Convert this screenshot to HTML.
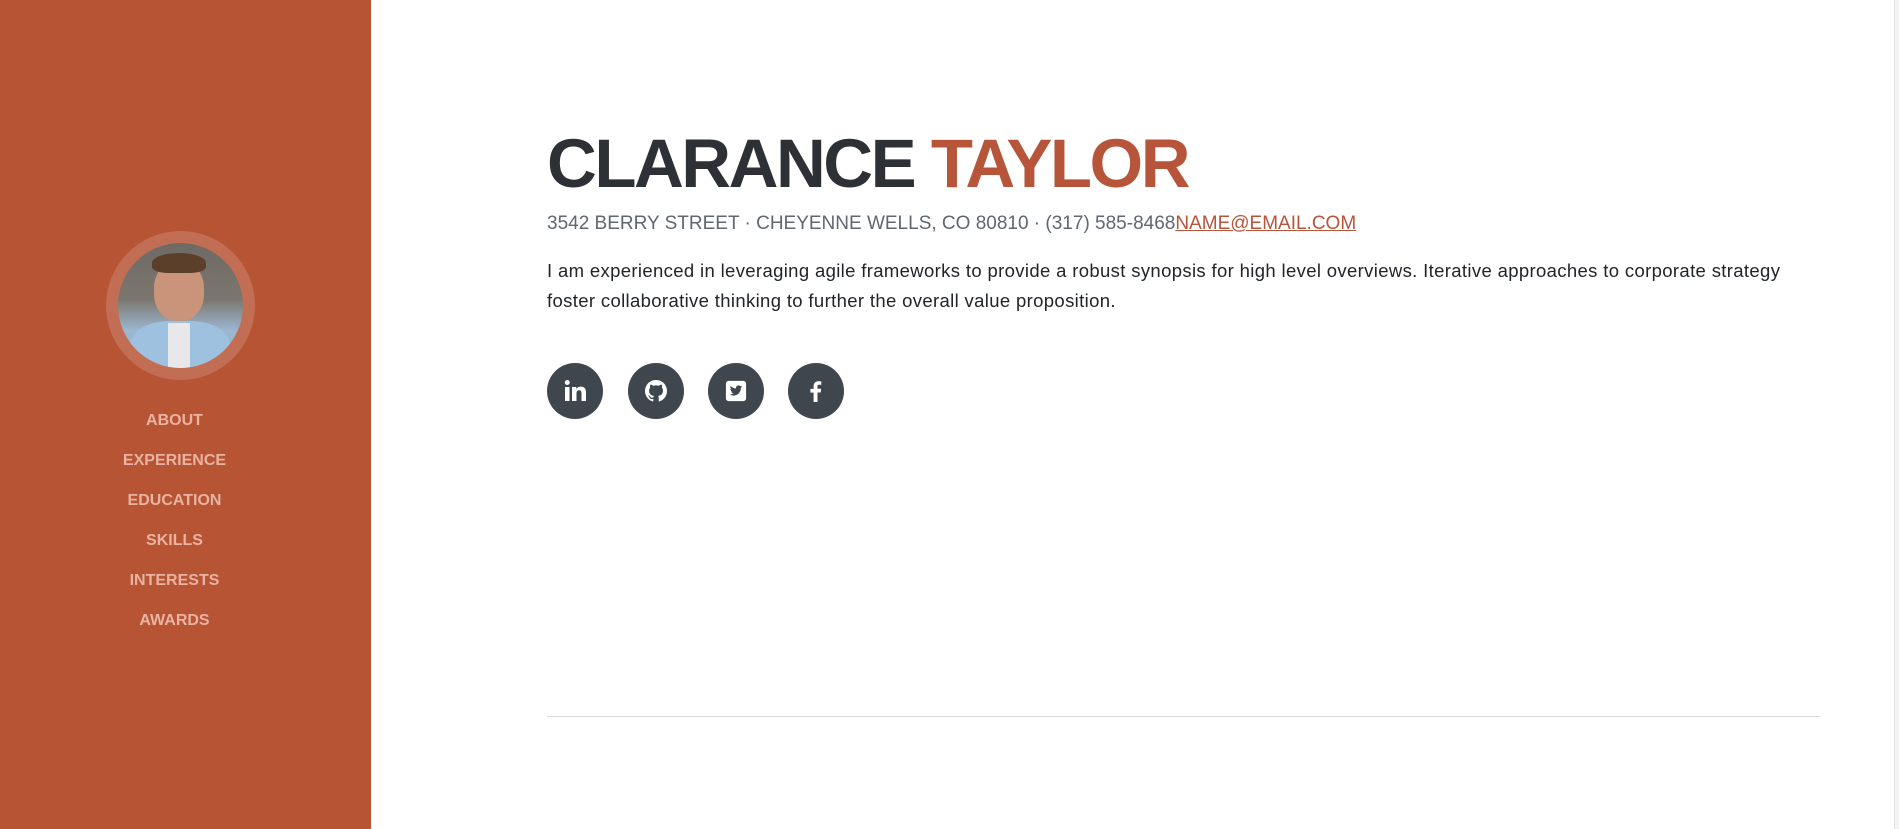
<!DOCTYPE html>
<html><head><meta charset="utf-8"><style>
*{margin:0;padding:0;box-sizing:border-box}
body{width:1899px;height:829px;overflow:hidden;background:#fff;font-family:"Liberation Sans",sans-serif;position:relative}
.side{position:absolute;left:0;top:0;width:371px;height:829px;background:#b75434}
.av{position:absolute;left:106px;top:231px;width:149px;height:149px;border-radius:50%;background:#c26e55;padding:12px}
.av .ph{width:125px;height:125px;border-radius:50%;overflow:hidden;background:linear-gradient(#6e6a64 0%,#7b766d 45%,#9cb7d1 70%,#8fb0d0 100%);position:relative}
.nav{position:absolute;left:0;width:349px;text-align:center;color:#e8b3a2;font-weight:bold;font-size:16px;letter-spacing:0}
h1{position:absolute;left:547px;top:124px;font-size:69px;font-weight:bold;color:#2d3136;letter-spacing:-2.5px;white-space:nowrap}
h1 span{color:#b7553a}
.addr{position:absolute;left:547px;top:213px;font-size:19px;color:#5f6770;white-space:nowrap;letter-spacing:0}
.addr a{color:#b7553a;text-decoration:underline}
.p{position:absolute;left:547px;top:256px;width:1250px;font-size:18.5px;line-height:30px;color:#212529;letter-spacing:.35px}
.ic{position:absolute;top:363px;width:56px;height:56px;border-radius:50%;background:#3f464e;display:flex;align-items:center;justify-content:center}
hr{position:absolute;left:547px;top:716px;width:1273px;border:0;border-top:1px solid #d6d9dc}
.sb{position:absolute;left:1894px;top:0;width:5px;height:829px;background:#f3f3f3;border-left:1px solid #e4e4e4}
</style></head><body>
<div class="side">
<div class="av"><div class="ph">
<div style="position:absolute;left:36px;top:18px;width:50px;height:60px;border-radius:45%;background:#c99479"></div>
<div style="position:absolute;left:34px;top:10px;width:54px;height:20px;border-radius:50% 50% 30% 30%;background:#5b3f2b"></div>
<div style="position:absolute;left:12px;top:78px;width:100px;height:60px;border-radius:40% 40% 0 0;background:#9ec1e0"></div>
<div style="position:absolute;left:50px;top:80px;width:22px;height:45px;background:#e8e8ea"></div>
</div></div>
<div class="nav" style="top:412px">ABOUT</div>
<div class="nav" style="top:452px">EXPERIENCE</div>
<div class="nav" style="top:492px">EDUCATION</div>
<div class="nav" style="top:532px">SKILLS</div>
<div class="nav" style="top:572px">INTERESTS</div>
<div class="nav" style="top:612px">AWARDS</div>
</div>
<h1>CLARANCE <span>TAYLOR</span></h1>
<div class="addr">3542 BERRY STREET · CHEYENNE WELLS, CO 80810 · (317) 585-8468<a>NAME@EMAIL.COM</a></div>
<div class="p">I am experienced in leveraging agile frameworks to provide a robust synopsis for high level overviews. Iterative approaches to corporate strategy foster collaborative thinking to further the overall value proposition.</div>
<div class="ic" style="left:547px"><svg width="24" height="24" viewBox="0 0 24 24" fill="#fff"><rect x="2" y="8" width="4.5" height="14"/><circle cx="4.25" cy="3.5" r="2.5"/><path d="M9 8h4.3v2c.7-1.3 2.3-2.4 4.6-2.4 4.4 0 5.1 2.9 5.1 6.6V22h-4.5v-6.9c0-1.7 0-3.8-2.3-3.8s-2.7 1.8-2.7 3.7V22H9z"/></svg></div>
<div class="ic" style="left:628px"><svg width="24" height="24" viewBox="0 0 24 24" fill="#fff"><path d="M12 1C5.9 1 1 5.9 1 12c0 4.9 3.2 9 7.5 10.4.6.1.8-.2.8-.5v-2c-3 .7-3.7-1.3-3.7-1.3-.5-1.3-1.2-1.6-1.2-1.6-1-.7.1-.6.1-.6 1.1.1 1.7 1.1 1.7 1.1 1 1.7 2.6 1.2 3.2.9.1-.7.4-1.2.7-1.5-2.4-.3-5-1.2-5-5.4 0-1.2.4-2.2 1.1-2.9-.1-.3-.5-1.4.1-2.9 0 0 .9-.3 3 1.1a10.4 10.4 0 0 1 5.5 0c2.1-1.4 3-1.1 3-1.1.6 1.5.2 2.6.1 2.9.7.8 1.1 1.7 1.1 2.9 0 4.2-2.6 5.1-5 5.4.4.3.7 1 .7 2v3c0 .3.2.6.8.5C19.8 21 23 16.9 23 12 23 5.9 18.1 1 12 1z"/></svg></div>
<div class="ic" style="left:708px"><svg width="22" height="22" viewBox="0 0 24 24"><rect x="1" y="1" width="22" height="22" rx="3" fill="#fff"/><path d="M19 7.2c-.5.2-1 .4-1.6.4.6-.3 1-.9 1.2-1.5-.5.3-1.1.6-1.8.7a2.8 2.8 0 0 0-4.8 2.5c-2.3-.1-4.4-1.2-5.8-2.9-.8 1.3-.4 2.9.9 3.7-.5 0-.9-.1-1.3-.3 0 1.4 1 2.5 2.2 2.8-.4.1-.8.1-1.3 0 .4 1.1 1.4 1.9 2.6 1.9A5.6 5.6 0 0 1 5 15.7c1.3.8 2.7 1.3 4.3 1.3 5.2 0 8.1-4.4 8-8.4.6-.4 1.1-.9 1.5-1.4z" fill="#3f464e"/></svg></div>
<div class="ic" style="left:788px"><svg width="24" height="24" viewBox="0 0 24 24" fill="#fff"><path d="M13.5 23V13.5h3.2l.5-3.7h-3.7V7.5c0-1.1.3-1.8 1.8-1.8h2V2.4c-.3 0-1.5-.2-2.9-.2-2.9 0-4.8 1.8-4.8 5v2.7H6.4v3.7h3.2V23z"/></svg></div>
<hr>
<div class="sb"></div>
</body></html>
